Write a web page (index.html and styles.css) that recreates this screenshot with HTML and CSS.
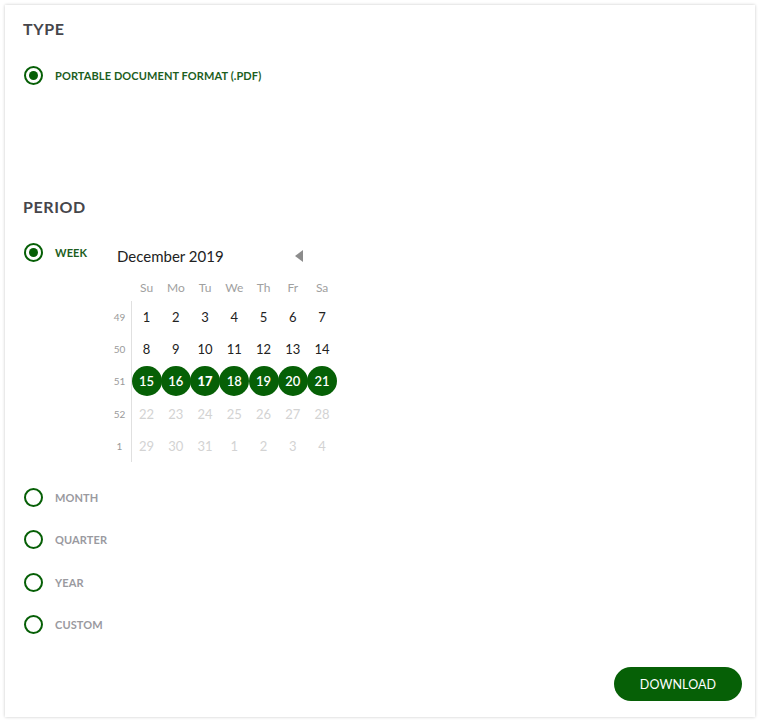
FILE: index.html
```html
<!DOCTYPE html>
<html>
<head>
<meta charset="utf-8">
<link rel="stylesheet" href="styles.css">
</head>
<body>
<div class="card">
  <section class="section">
    <h2 class="heading">TYPE</h2>
    <div class="option checked">
      <span class="radio"></span>
      <span class="label">PORTABLE DOCUMENT FORMAT (.PDF)</span>
    </div>
  </section>

  <section class="section period">
    <h2 class="heading">PERIOD</h2>
    <div class="option checked week-option">
      <span class="radio"></span>
      <span class="label">WEEK</span>
      <div class="calendar">
        <div class="cal-head">
          <span class="cal-title">December 2019</span>
          <span class="cal-prev"></span>
        </div>
        <div class="cal-grid">
          <span class="wk-blank"></span>
          <span class="dn">Su</span><span class="dn">Mo</span><span class="dn">Tu</span><span class="dn">We</span><span class="dn">Th</span><span class="dn">Fr</span><span class="dn">Sa</span>

          <span class="wk">49</span>
          <span class="d">1</span><span class="d">2</span><span class="d">3</span><span class="d">4</span><span class="d">5</span><span class="d">6</span><span class="d">7</span>

          <span class="wk">50</span>
          <span class="d">8</span><span class="d">9</span><span class="d">10</span><span class="d">11</span><span class="d">12</span><span class="d">13</span><span class="d">14</span>

          <span class="wk">51</span>
          <span class="d sel"><b>15</b></span><span class="d sel"><b>16</b></span><span class="d sel today"><b>17</b></span><span class="d sel"><b>18</b></span><span class="d sel"><b>19</b></span><span class="d sel"><b>20</b></span><span class="d sel"><b>21</b></span>

          <span class="wk">52</span>
          <span class="d off">22</span><span class="d off">23</span><span class="d off">24</span><span class="d off">25</span><span class="d off">26</span><span class="d off">27</span><span class="d off">28</span>

          <span class="wk">1</span>
          <span class="d off">29</span><span class="d off">30</span><span class="d off">31</span><span class="d off">1</span><span class="d off">2</span><span class="d off">3</span><span class="d off">4</span>
        </div>
      </div>
    </div>
    <div class="option after-week"><span class="radio"></span><span class="label">MONTH</span></div>
    <div class="option"><span class="radio"></span><span class="label">QUARTER</span></div>
    <div class="option"><span class="radio"></span><span class="label">YEAR</span></div>
    <div class="option"><span class="radio"></span><span class="label">CUSTOM</span></div>
  </section>

  <div class="actions">
    <button class="btn">DOWNLOAD</button>
  </div>
</div>
</body>
</html>
```

FILE: styles.css
```css
* { box-sizing: border-box; }
html, body { margin: 0; padding: 0; background: #fff; }
body {
  font-family: Lato, "Noto Sans", sans-serif;
  padding: 5px;
}
.card {
  width: 750px;
  height: 712px;
  background: #fff;
  box-shadow: 0 0 3px rgba(0,0,0,0.22);
  padding: 14px 13px 16px 18px;
  display: flex;
  flex-direction: column;
}
.heading {
  margin: 0;
  font-size: 16px;
  line-height: 20px;
  font-weight: 700;
  letter-spacing: 0.6px;
  color: #46464b;
}
.section .heading + .option { margin-top: 26px; }
.period { margin-top: 112px; }

.option {
  display: flex;
  align-items: center;
  height: 20px;
  margin-top: 22.3px;
}
.option.after-week { margin-top: 25.5px; }
.radio {
  width: 19px;
  height: 19px;
  border: 2px solid #065f06;
  border-radius: 50%;
  margin-left: 1px;
  display: flex;
  align-items: center;
  justify-content: center;
  flex: none;
}
.checked .radio::after {
  content: "";
  width: 9px;
  height: 9px;
  border-radius: 50%;
  background: #065f06;
}
.label {
  margin-left: 12px;
  font-size: 11px;
  font-weight: 700;
  color: #9a9a9f;
  letter-spacing: 0.1px;
}
.checked .label { color: #1d5e1d; }

.week-option {
  align-items: flex-start;
  height: auto;
}
.week-option .label { line-height: 20px; width: 45px; flex: none; }

.calendar {
  margin-left: 10px;
  margin-top: -2px;
  width: 228px;
}
.cal-head {
  display: flex;
  align-items: center;
  height: 30px;
  padding-left: 7px;
}
.cal-title {
  font-size: 15px;
  color: #222;
}
.cal-prev {
  margin-left: 71px;
  width: 0;
  height: 0;
  border-top: 6px solid transparent;
  border-bottom: 6px solid transparent;
  border-right: 8px solid #8c8c8c;
}
.cal-grid {
  display: grid;
  grid-template-columns: 22px repeat(7, 29.25px);
  grid-template-rows: 27px repeat(5, 32.2px);
  margin-top: 3px;
  font-size: 13px;
}
.cal-grid > span {
  display: flex;
  align-items: center;
  justify-content: center;
}
.dn { color: #a0a0a0; font-size: 12px; }
.wk {
  font-size: 10px;
  color: #9a9a9a;
  border-right: 1px solid #e0e0e0;
  padding-right: 2px;
}
.d { color: #222; }
.d.off { color: #d3d3d3; }
.d.sel b {
  font-weight: 600;
  color: #fff;
  width: 30px;
  height: 30px;
  flex: none;
  border-radius: 50%;
  background: #066006;
  display: flex;
  align-items: center;
  justify-content: center;
}
.d.today b { font-weight: 900; }

.actions {
  margin-top: auto;
  display: flex;
  justify-content: flex-end;
}
.btn {
  width: 128px;
  height: 34px;
  border: none;
  border-radius: 17px;
  background: #066006;
  color: #fff;
  font-family: Lato, "Noto Sans", sans-serif;
  font-size: 12.5px;
  letter-spacing: 0.1px;
  padding: 0;
}
```
